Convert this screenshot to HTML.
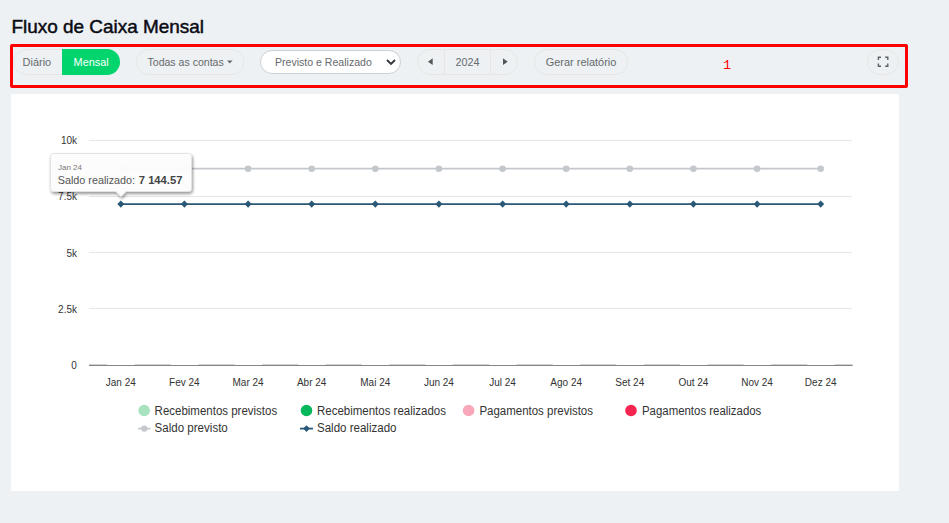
<!DOCTYPE html>
<html lang="pt-BR">
<head>
<meta charset="utf-8">
<title>Fluxo de Caixa Mensal</title>
<style>
*{box-sizing:border-box;margin:0;padding:0}
html,body{width:949px;height:523px;overflow:hidden;background:#edf1f4;font-family:"Liberation Sans",Arial,sans-serif}
body{position:relative}
.card{position:absolute;left:11px;top:94px;width:888px;height:397px;background:#fff}
.redbox{position:absolute;left:10px;top:44px;width:898px;height:44px;border:3px solid #fe0000;border-radius:2px}
svg.ui{position:absolute;left:0;top:0}
</style>
</head>
<body>
<div class="card"></div>
<div class="redbox"></div>
<svg class="ui" width="949" height="523" viewBox="0 0 949 523" font-family="Liberation Sans, Arial, sans-serif">
<defs>
<filter id="sh" x="-10%" y="-20%" width="120%" height="150%"><feGaussianBlur in="SourceAlpha" stdDeviation="1.500"/><feOffset dx="1" dy="1.500"/><feComponentTransfer><feFuncA type="linear" slope="0.420"/></feComponentTransfer><feMerge><feMergeNode/><feMergeNode in="SourceGraphic"/></feMerge></filter>
<clipPath id="grp"><rect x="13.500" y="49" width="106.500" height="26" rx="13"/></clipPath>
</defs>
<!-- title -->
<text x="11.500" y="32.500" font-size="18.500" fill="#0a0a12" stroke="#0a0a12" stroke-width="0.450" textLength="192.500" lengthAdjust="spacingAndGlyphs">Fluxo de Caixa Mensal</text>
<!-- toolbar -->
<g fill="none" stroke="#e7e6e5" stroke-width="1">
<rect x="13.500" y="49.500" width="106" height="25" rx="12.500"/>
<rect x="136.500" y="49.500" width="107.500" height="25" rx="12.500"/>
<rect x="417.500" y="49.500" width="100" height="25" rx="12.500"/>
<line x1="444.500" x2="444.500" y1="50" y2="74"/>
<line x1="490.500" x2="490.500" y1="50" y2="74"/>
<rect x="534.500" y="49.500" width="93" height="25" rx="12.500"/>
<rect x="867.500" y="49.500" width="31" height="25" rx="12.500"/>
</g>
<rect x="62" y="49" width="70" height="26" fill="#00d56d" clip-path="url(#grp)"/>
<rect x="260.500" y="50.500" width="140" height="23" rx="11.500" fill="#fff" stroke="#ccd0d3" stroke-width="1"/>
<g font-size="11" fill="#676a6c">
<text x="22.600" y="66" textLength="28.600" lengthAdjust="spacingAndGlyphs">Diário</text>
<text x="73.600" y="66" fill="#fff" textLength="35" lengthAdjust="spacingAndGlyphs">Mensal</text>
<text x="147.500" y="66" textLength="76.200" lengthAdjust="spacingAndGlyphs">Todas as contas</text>
<text x="275" y="66" textLength="96.800" lengthAdjust="spacingAndGlyphs">Previsto e Realizado</text>
<text x="455.600" y="66" textLength="24" lengthAdjust="spacingAndGlyphs">2024</text>
<text x="545.700" y="66" textLength="70.700" lengthAdjust="spacingAndGlyphs">Gerar relatório</text>
</g>
<path d="M227 60.500 h5.600 l-2.800 3z" fill="#676a6c"/>
<path d="M387 60 L391 64 L395 60" fill="none" stroke="#343a40" stroke-width="1.900"/>
<path d="M432.700 58.300 v6.800 l-4.700 -3.400z" fill="#555"/>
<path d="M503 58.300 v6.800 l4.700 -3.400z" fill="#555"/>
<path d="M878.400 60 V57.300 H881 M885.200 57.300 H887.800 V60 M887.800 63.600 V66.300 H885.200 M881 66.300 H878.400 V63.600" fill="none" stroke="#5e6164" stroke-width="1.400"/>
<text x="723" y="69.400" font-size="13.500" fill="#ff0000" font-family="Liberation Mono, monospace">1</text>

<g stroke="#e7e6e5" stroke-width="1" shape-rendering="crispEdges">
<line x1="89" x2="852" y1="140.5" y2="140.5"/>
<line x1="89" x2="852" y1="196.5" y2="196.5"/>
<line x1="89" x2="852" y1="252.5" y2="252.5"/>
<line x1="89" x2="852" y1="308.5" y2="308.5"/>
</g>
<rect x="89" y="365" width="763.600" height="1" fill="#858585"/>
<g fill="#d2d2d2">
<rect x="89" y="364" width="18" height="1"/>
<rect x="134.8" y="364" width="36.1" height="1"/>
<rect x="198.4" y="364" width="36.2" height="1"/>
<rect x="262.1" y="364" width="36.1" height="1"/>
<rect x="325.7" y="364" width="36.1" height="1"/>
<rect x="389.3" y="364" width="36.1" height="1"/>
<rect x="452.9" y="364" width="36.2" height="1"/>
<rect x="516.6" y="364" width="36.1" height="1"/>
<rect x="580.2" y="364" width="36.1" height="1"/>
<rect x="643.8" y="364" width="36.1" height="1"/>
<rect x="707.4" y="364" width="36.2" height="1"/>
<rect x="771.1" y="364" width="36.1" height="1"/>
<rect x="834.7" y="364" width="17.9" height="1"/>
</g>
<g font-size="10" fill="#333" text-anchor="end">
<text x="77" y="144">10k</text>
<text x="77" y="200">7.5k</text>
<text x="77" y="257">5k</text>
<text x="77" y="313">2.5k</text>
<text x="76.700" y="369">0</text>
</g>
<g font-size="10" fill="#333" text-anchor="middle">
<text x="120.8" y="386">Jan 24</text>
<text x="184.4" y="386">Fev 24</text>
<text x="248.1" y="386">Mar 24</text>
<text x="311.7" y="386">Abr 24</text>
<text x="375.3" y="386">Mai 24</text>
<text x="438.9" y="386">Jun 24</text>
<text x="502.6" y="386">Jul 24</text>
<text x="566.2" y="386">Ago 24</text>
<text x="629.8" y="386">Set 24</text>
<text x="693.4" y="386">Out 24</text>
<text x="757.1" y="386">Nov 24</text>
<text x="820.7" y="386">Dez 24</text>
</g>
<line x1="120.800" x2="820.700" y1="168.700" y2="168.700" stroke="#c4c8cc" stroke-width="1.700"/>
<g fill="#c4c8cc"><circle cx="120.8" cy="168.700" r="3.300"/><circle cx="184.4" cy="168.700" r="3.300"/><circle cx="248.1" cy="168.700" r="3.300"/><circle cx="311.7" cy="168.700" r="3.300"/><circle cx="375.3" cy="168.700" r="3.300"/><circle cx="438.9" cy="168.700" r="3.300"/><circle cx="502.6" cy="168.700" r="3.300"/><circle cx="566.2" cy="168.700" r="3.300"/><circle cx="629.8" cy="168.700" r="3.300"/><circle cx="693.4" cy="168.700" r="3.300"/><circle cx="757.1" cy="168.700" r="3.300"/><circle cx="820.7" cy="168.700" r="3.300"/></g>
<line x1="120.800" x2="820.700" y1="204.100" y2="204.100" stroke="#2a5877" stroke-width="1.700"/>
<g fill="#2a5877"><path d="M120.8 200.500 l3.500 3.600 l-3.500 3.600 l-3.500 -3.600z"/><path d="M184.4 200.500 l3.500 3.600 l-3.500 3.600 l-3.500 -3.600z"/><path d="M248.1 200.500 l3.500 3.600 l-3.500 3.600 l-3.500 -3.600z"/><path d="M311.7 200.500 l3.500 3.600 l-3.500 3.600 l-3.500 -3.600z"/><path d="M375.3 200.500 l3.500 3.600 l-3.500 3.600 l-3.500 -3.600z"/><path d="M438.9 200.500 l3.500 3.600 l-3.500 3.600 l-3.500 -3.600z"/><path d="M502.6 200.500 l3.500 3.600 l-3.500 3.600 l-3.500 -3.600z"/><path d="M566.2 200.500 l3.500 3.600 l-3.500 3.600 l-3.500 -3.600z"/><path d="M629.8 200.500 l3.500 3.600 l-3.500 3.600 l-3.500 -3.600z"/><path d="M693.4 200.500 l3.500 3.600 l-3.500 3.600 l-3.500 -3.600z"/><path d="M757.1 200.500 l3.500 3.600 l-3.500 3.600 l-3.500 -3.600z"/><path d="M820.7 200.500 l3.500 3.600 l-3.500 3.600 l-3.500 -3.600z"/></g>
<!-- tooltip -->
<path d="M53.500 153.500 H188.500 a3 3 0 0 1 3 3 V188.500 a3 3 0 0 1 -3 3 H126 L121 196.500 L116 191.500 H53.500 a3 3 0 0 1 -3 -3 V156.500 a3 3 0 0 1 3 -3z" fill="#fff" fill-opacity="0.930" stroke="#e2e2e2" stroke-width="1" filter="url(#sh)"/>
<text x="58" y="170" font-size="8" fill="#777">Jan 24</text>
<text x="57.800" y="184" font-size="11" fill="#555" textLength="77.200" lengthAdjust="spacingAndGlyphs">Saldo realizado:</text>
<text x="138.800" y="184" font-size="11" fill="#444" font-weight="bold" textLength="43.600" lengthAdjust="spacingAndGlyphs">7 144.57</text>
<!-- legend -->
<g font-size="12" fill="#333">
<circle cx="144.200" cy="410.500" r="5.800" fill="#a8e2bf"/><text x="154.600" y="415" textLength="122.600" lengthAdjust="spacingAndGlyphs">Recebimentos previstos</text>
<circle cx="306.500" cy="410.500" r="5.800" fill="#06b75c"/><text x="317" y="415" textLength="129" lengthAdjust="spacingAndGlyphs">Recebimentos realizados</text>
<circle cx="468.600" cy="410.500" r="5.800" fill="#f8a8b8"/><text x="479.400" y="415" textLength="113.600" lengthAdjust="spacingAndGlyphs">Pagamentos previstos</text>
<circle cx="631" cy="410.500" r="5.800" fill="#f52450"/><text x="642" y="415" textLength="119.300" lengthAdjust="spacingAndGlyphs">Pagamentos realizados</text>
<line x1="138" x2="150.500" y1="428.600" y2="428.600" stroke="#c4c8cc" stroke-width="1.800"/><circle cx="144.300" cy="428.600" r="3.200" fill="#c4c8cc"/><text x="154.600" y="432" textLength="73.200" lengthAdjust="spacingAndGlyphs">Saldo previsto</text>
<line x1="300" x2="313" y1="428.600" y2="428.600" stroke="#2a5877" stroke-width="1.800"/><path d="M306.500 425.200 l3.300 3.400 l-3.300 3.400 l-3.300 -3.400z" fill="#2a5877"/><text x="317" y="432" textLength="79.500" lengthAdjust="spacingAndGlyphs">Saldo realizado</text>
</g>
</svg>
</body>
</html>
